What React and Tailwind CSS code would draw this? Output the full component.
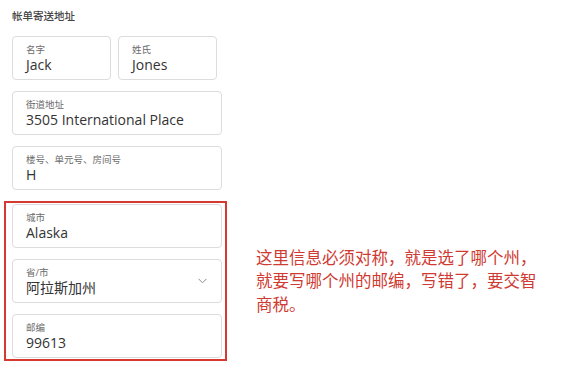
import React from 'react';

const font = { fontFamily: '"Open Sans", "Noto Sans CJK SC", sans-serif' };

const Field = ({ label, value, width = 'w-[210px]', select = false }) => (
  <div className={`${width} h-[44px] border border-[#dcdcdc] rounded-[4px] bg-white pl-[13px] pr-[14px] flex items-center justify-between`}>
    <div className="flex flex-col">
      <span className="text-[9.5px] leading-[12px] text-[#6b6b6b]">{label}</span>
      <span className="text-[14px] leading-[17px] text-[#333]">{value}</span>
    </div>
    {select && (
      <svg width="9" height="6" viewBox="0 0 9 6" className="shrink-0">
        <polyline points="0.5,0.8 4.5,4.8 8.5,0.8" fill="none" stroke="#8a8a8a" strokeWidth="1" />
      </svg>
    )}
  </div>
);

export default function App() {
  return (
    <div className="w-[568px] h-[367px] bg-white pl-[12px] pt-[9px] overflow-hidden" style={font}>
      <h2 className="text-[10.5px] leading-[14px] text-[#444] font-medium">帐单寄送地址</h2>

      <div className="flex flex-col gap-[11px] mt-[13px]">
        <div className="flex gap-[7px]">
          <Field label="名字" value="Jack" width="w-[99px]" />
          <Field label="姓氏" value="Jones" width="w-[99px]" />
        </div>
        <Field label="街道地址" value="3505 International Place" />
        <Field label="楼号、单元号、房间号" value="H" />
      </div>

      <div className="flex items-center -ml-[8px] mt-[11px]">
        <div className="w-[223px] border-2 border-[#d43a32] pl-[6px] pr-[3px] pt-[1px] pb-[1px] flex flex-col gap-[11px]">
          <Field label="城市" value="Alaska" />
          <Field label="省/市" value="阿拉斯加州" select />
          <Field label="邮编" value="99613" />
        </div>
        <p
          className="ml-[29px] w-[288px] text-[16.5px] leading-[23.5px] text-[#cf3a32]"
          style={{ fontFamily: '"Noto Sans CJK SC", "Noto Sans", sans-serif' }}
        >
          这里信息必须对称，就是选了哪个州，就要写哪个州的邮编，写错了，要交智商税。
        </p>
      </div>
    </div>
  );
}
